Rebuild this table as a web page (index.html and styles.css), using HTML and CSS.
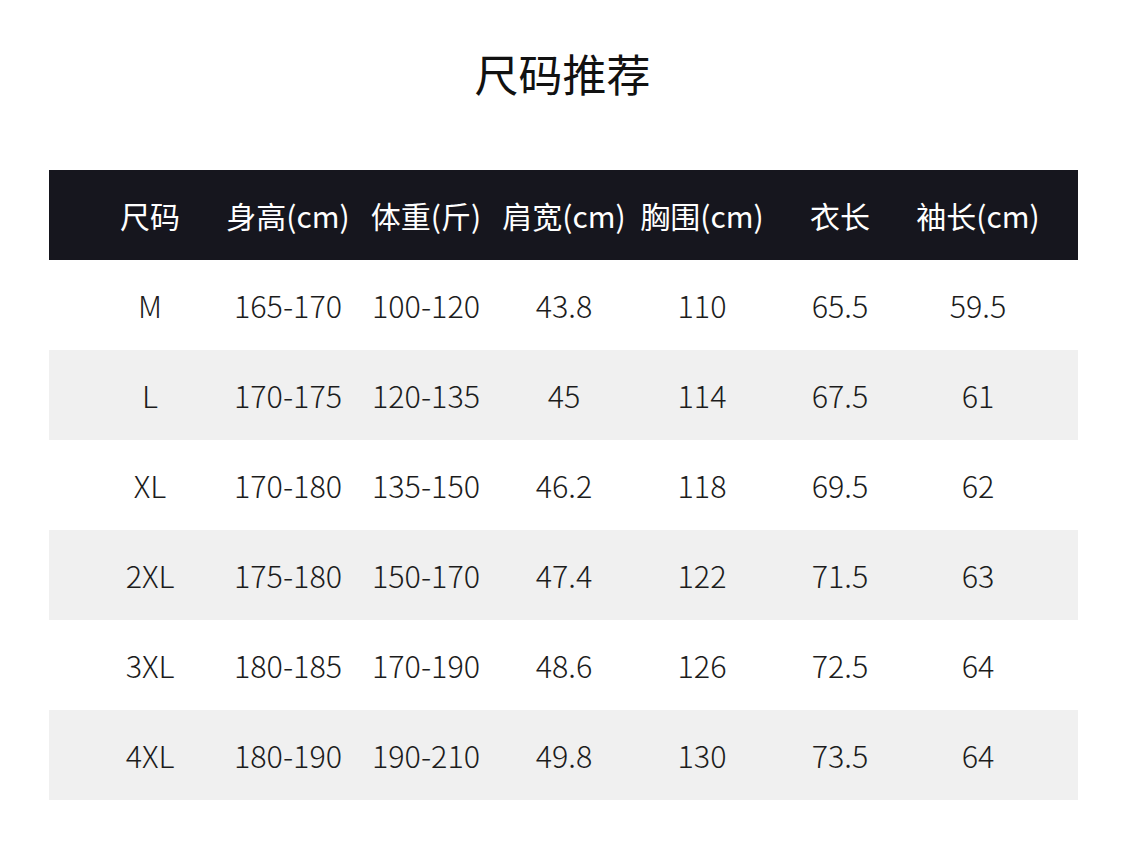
FILE: index.html
```html
<!DOCTYPE html>
<html lang="zh">
<head>
<meta charset="utf-8">
<link rel="stylesheet" href="styles.css">
</head>
<body>
<div class="page">
  <h1 class="title">尺码推荐</h1>
  <div class="table">
    <div class="row head">
      <div class="cell">尺码</div><div class="cell">身高(cm)</div><div class="cell">体重(斤)</div><div class="cell">肩宽(cm)</div><div class="cell">胸围(cm)</div><div class="cell">衣长</div><div class="cell">袖长(cm)</div>
    </div>
    <div class="row">
      <div class="cell">M</div><div class="cell">165-170</div><div class="cell">100-120</div><div class="cell">43.8</div><div class="cell">110</div><div class="cell">65.5</div><div class="cell">59.5</div>
    </div>
    <div class="row alt">
      <div class="cell">L</div><div class="cell">170-175</div><div class="cell">120-135</div><div class="cell">45</div><div class="cell">114</div><div class="cell">67.5</div><div class="cell">61</div>
    </div>
    <div class="row">
      <div class="cell">XL</div><div class="cell">170-180</div><div class="cell">135-150</div><div class="cell">46.2</div><div class="cell">118</div><div class="cell">69.5</div><div class="cell">62</div>
    </div>
    <div class="row alt">
      <div class="cell">2XL</div><div class="cell">175-180</div><div class="cell">150-170</div><div class="cell">47.4</div><div class="cell">122</div><div class="cell">71.5</div><div class="cell">63</div>
    </div>
    <div class="row">
      <div class="cell">3XL</div><div class="cell">180-185</div><div class="cell">170-190</div><div class="cell">48.6</div><div class="cell">126</div><div class="cell">72.5</div><div class="cell">64</div>
    </div>
    <div class="row alt">
      <div class="cell">4XL</div><div class="cell">180-190</div><div class="cell">190-210</div><div class="cell">49.8</div><div class="cell">130</div><div class="cell">73.5</div><div class="cell">64</div>
    </div>
  </div>
</div>
</body>
</html>
```
FILE: styles.css
```css
html, body {
  margin: 0;
  padding: 0;
  background: #ffffff;
}
body {
  font-family: "Noto Sans CJK SC", "Noto Sans", sans-serif;
  color: #1a1a1a;
}
.page {
  width: 1125px;
  height: 847px;
  padding-top: 44px;
  box-sizing: border-box;
}
.title {
  margin: 0;
  height: 58px;
  line-height: 58px;
  text-align: center;
  font-size: 44px;
  font-weight: 400;
  color: #111;
}
.table {
  margin: 68px 0 0 49px;
  width: 1029px;
}
.row {
  display: grid;
  grid-template-columns: repeat(7, 138px);
  padding-left: 32px;
  height: 90px;
  align-items: center;
  font-size: 30.5px;
  font-weight: 300;
  color: #1c1c1c;
}
.row.head {
  background: #16161e;
  color: #ffffff;
  font-size: 30px;
  font-weight: 400;
}
.row.alt {
  background: #f0f0f0;
}
.cell {
  text-align: center;
  white-space: nowrap;
  line-height: 1;
}
```
